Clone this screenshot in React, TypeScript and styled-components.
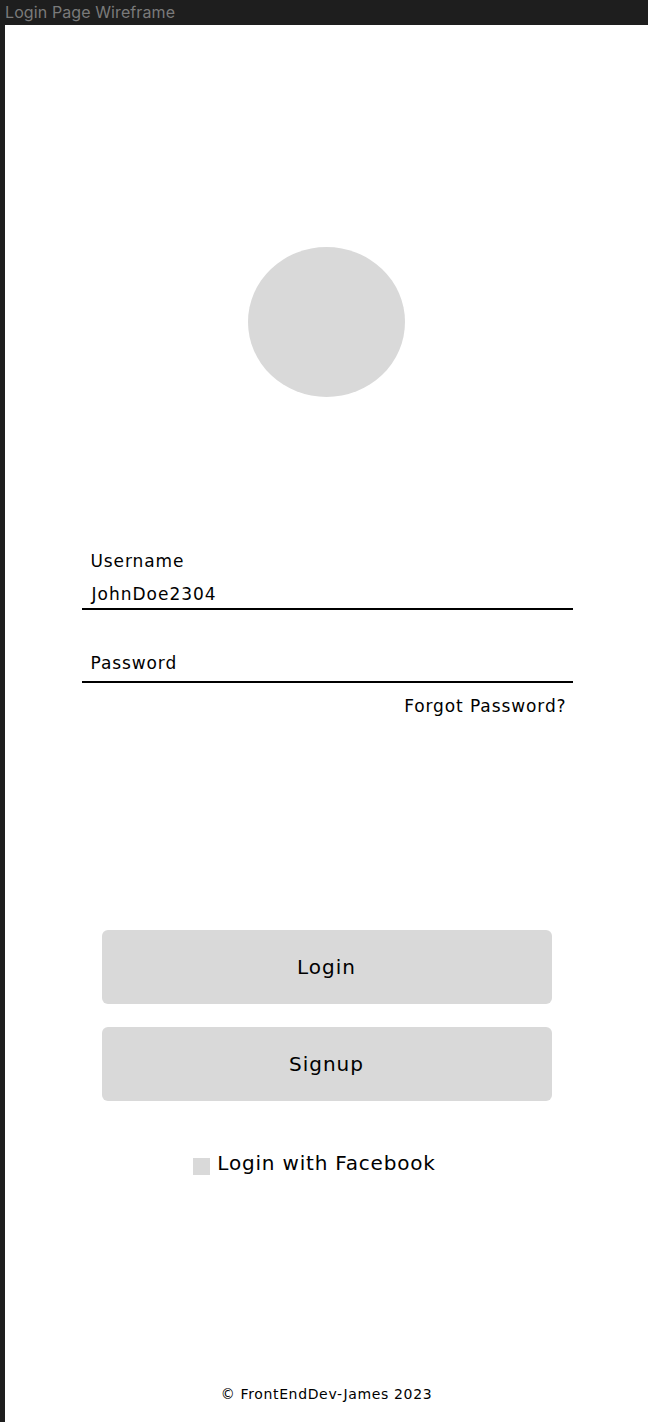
import React from "react";
import styled, { createGlobalStyle } from "styled-components";

const GlobalStyle = createGlobalStyle`
  html, body {
    margin: 0;
    padding: 0;
    background: #1e1e1e;
  }
  * { box-sizing: border-box; }
`;

const Page = styled.div`
  width: 648px;
  height: 1422px;
  display: flex;
  flex-direction: column;
  background: #1e1e1e;
  overflow: hidden;
`;

const TitleBar = styled.div`
  height: 25px;
  flex: none;
  padding-left: 5px;
  font-family: Inter, "Liberation Sans", sans-serif;
  font-size: 16px;
  line-height: 24px;
  letter-spacing: 0.1px;
  color: #7a7a7a;
`;

const Frame = styled.main`
  flex: 1;
  margin-left: 5px;
  background: #ffffff;
  display: flex;
  flex-direction: column;
  align-items: center;
  font-family: "DejaVu Sans", Inter, sans-serif;
  color: #000;
`;

const Avatar = styled.div`
  width: 157px;
  height: 150px;
  border-radius: 50%;
  background: #d9d9d9;
  margin-top: 222px;
  flex: none;
`;

const Form = styled.form`
  width: 491px;
  margin-top: 153px;
  margin-left: 1px;
  display: flex;
  flex-direction: column;
`;

const Field = styled.div<{ $gap?: number; $pad?: number }>`
  display: flex;
  flex-direction: column;
  padding: 0 9px ${(p) => p.$pad ?? 3}px;
  border-bottom: 2px solid #000;
  margin-top: ${(p) => p.$gap ?? 0}px;
`;

const Label = styled.span`
  font-size: 17px;
  line-height: 22px;
  letter-spacing: 0.9px;
`;

const Value = styled.span`
  font-size: 17px;
  line-height: 22px;
  margin-top: 11px;
  padding-left: 1px;
  letter-spacing: 1px;
`;

const Forgot = styled.a`
  align-self: flex-end;
  margin-top: 12px;
  margin-right: 6px;
  font-size: 17px;
  line-height: 22px;
  letter-spacing: 0.9px;
  color: #000;
  text-decoration: none;
`;

const Actions = styled.div`
  margin-top: 213px;
  display: flex;
  flex-direction: column;
  align-items: center;
  gap: 23px;
`;

const Button = styled.button`
  width: 450px;
  height: 74px;
  border: none;
  border-radius: 6px;
  background: #d9d9d9;
  font-family: "DejaVu Sans", Inter, sans-serif;
  font-size: 20px;
  letter-spacing: 1px;
  color: #000;
  cursor: pointer;
  padding: 0;
`;

const FacebookRow = styled.div`
  margin-top: 49px;
  display: flex;
  align-items: flex-start;
  gap: 7px;
  padding-right: 24px;
`;

const FacebookIcon = styled.span`
  width: 17px;
  height: 17px;
  background: #d9d9d9;
  margin-top: 8px;
  flex: none;
`;

const FacebookText = styled.span`
  font-size: 20px;
  line-height: 26px;
  letter-spacing: 0.8px;
`;

const Footer = styled.footer`
  margin-top: auto;
  margin-bottom: 18px;
  font-size: 14px;
  line-height: 20px;
  letter-spacing: 0.65px;
`;

export default function App() {
  return (
    <>
      <GlobalStyle />
      <Page>
        <TitleBar>Login Page Wireframe</TitleBar>
        <Frame>
          <Avatar />
          <Form onSubmit={(e) => e.preventDefault()}>
            <Field>
              <Label>Username</Label>
              <Value>JohnDoe2304</Value>
            </Field>
            <Field $gap={42} $pad={7}>
              <Label>Password</Label>
            </Field>
            <Forgot href="#">Forgot Password?</Forgot>
          </Form>
          <Actions>
            <Button type="button">Login</Button>
            <Button type="button">Signup</Button>
          </Actions>
          <FacebookRow>
            <FacebookIcon />
            <FacebookText>Login with Facebook</FacebookText>
          </FacebookRow>
          <Footer>© FrontEndDev-James 2023</Footer>
        </Frame>
      </Page>
    </>
  );
}
